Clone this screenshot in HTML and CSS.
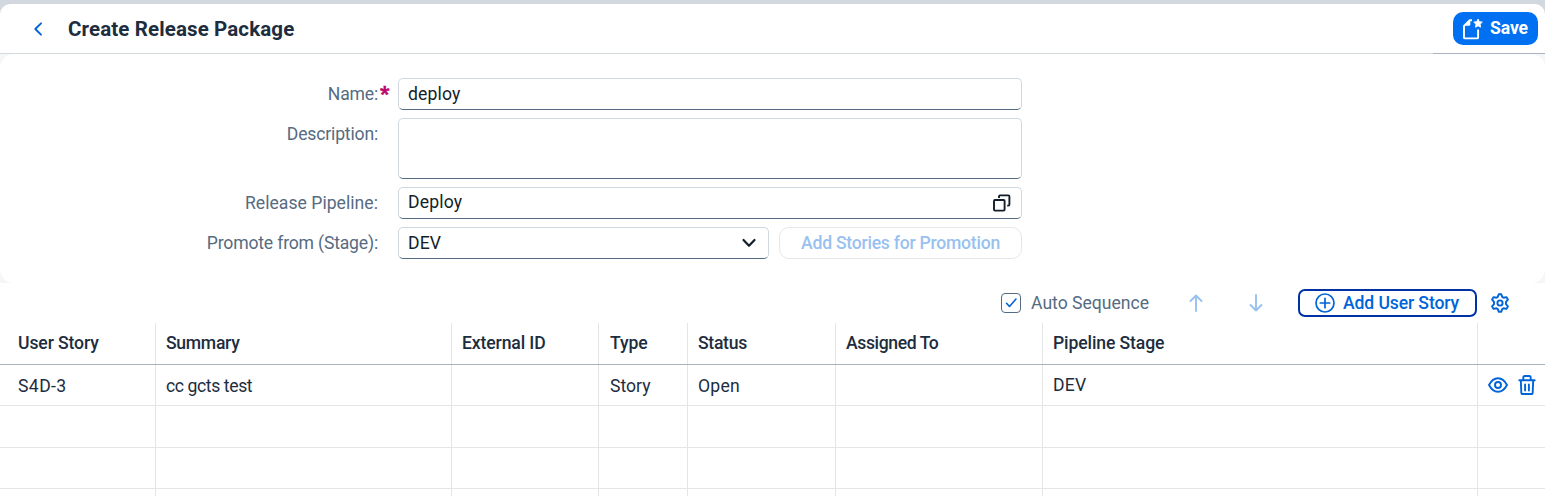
FILE: index.html
```html
<!DOCTYPE html>
<html lang="en">
<head>
<meta charset="utf-8">
<title>Create Release Package</title>
<link rel="stylesheet" href="styles.css">
</head>
<body>
<div class="page">
  <header class="header">
    <button class="back" aria-label="Back">
      <svg width="10" height="16" viewBox="0 0 10 16"><path d="M8 2.3 2.3 8 8 13.7" fill="none" stroke="currentColor" stroke-width="1.9" stroke-linecap="round" stroke-linejoin="round"/></svg>
    </button>
    <h1 class="title">Create Release Package</h1>
    <button class="save">
      <svg width="22" height="24" viewBox="0 0 22 24"><path d="M11 3.300H8.500L3 8.800v11.700q0 .9.900.9h12.300q.9 0 .9-.9V12.500" fill="none" stroke="currentColor" stroke-width="1.900" stroke-linejoin="round"/><path d="M9.300 3v4.300q0 1.500-1.500 1.500H3z" fill="currentColor"/><path d="m17.100 2 1.200 2.700 3 .4-2.200 2.100.5 3-2.500-1.400-2.600 1.400.5-3L12.800 5.100l3-.4z" fill="currentColor" stroke="currentColor" stroke-width=".9" stroke-linejoin="round"/></svg>
      <span class="save-text">Save</span>
    </button>
  </header>
  <div class="form-area">
    <form class="form">
      <label class="label name">Name:<span class="required">*</span></label>
      <div class="field input-name"><span>deploy</span></div>
      <label class="label description">Description:</label>
      <div class="field field-tall"></div>
      <label class="label">Release Pipeline:</label>
      <div class="field"><span>Deploy</span>
        <svg class="value-help" width="20" height="20" viewBox="0 0 20 20" fill="none" stroke="currentColor" stroke-width="1.900"><rect x="2" y="7" width="10.600" height="10.600" rx="1"/><path d="M7 5V3.400q0-1 1-1h8.400q1 0 1 1v8.200q0 1-1 1h-1.200"/></svg>
      </div>
      <label class="label promote-from">Promote from (Stage):</label>
      <div class="stage-row">
        <div class="field stage"><span>DEV</span>
          <svg class="chevron" width="16" height="12" viewBox="0 0 16 12"><path d="m2.500 3 5.500 5.800L13.500 3" fill="none" stroke="currentColor" stroke-width="2.200" stroke-linecap="round" stroke-linejoin="round"/></svg>
        </div>
        <button type="button" class="promote" disabled>Add Stories for Promotion</button>
      </div>
    </form>
  </div>
  <div class="toolbar">
    <span class="checkbox"><svg width="18" height="18" viewBox="0 0 18 18"><path d="m4.500 9.300 3 3.200L14 5" fill="none" stroke="currentColor" stroke-width="1.600" stroke-linecap="round" stroke-linejoin="round"/></svg></span>
    <span class="auto">Auto Sequence</span>
    <svg class="arrow up" width="14" height="18" viewBox="0 0 14 18"><path d="M7 17V1.500M1.500 7 7 1.500 12.500 7"/></svg>
    <svg class="arrow down" width="14" height="18" viewBox="0 0 14 18"><path d="M7 1v15.500M1.500 11 7 16.500 12.500 11"/></svg>
    <button class="add-story">
      <svg width="20" height="20" viewBox="0 0 20 20" fill="none" stroke="currentColor" stroke-width="1.700"><circle cx="10" cy="10" r="9"/><path d="M10 5.300v9.400M5.300 10h9.400" stroke-linecap="round"/></svg>
      <span>Add User Story</span>
    </button>
    <svg class="gear" width="20" height="20" viewBox="0 0 20 20" fill="none" stroke="currentColor" stroke-width="1.900" stroke-linejoin="round"><path d="M8.700 1.200h2.600l.9 2.700 1.400.8 2.800-.6 1.500 2.500-1.900 2.200v2.400l1.900 2.200-1.500 2.500-2.800-.6-1.400.8-.9 2.700H8.700l-.9-2.700-1.400-.8-2.800.6-1.500-2.500L4 11.200V8.800L2.100 6.600l1.500-2.500 2.800.6 1.400-.8z"/><circle cx="10" cy="10" r="2.600"/></svg>
  </div>
  <div class="table">
    <div class="row head"><div>User Story</div><div class="tight">Summary</div><div>External ID</div><div class="type">Type</div><div class="tight">Status</div><div class="tighter">Assigned To</div><div>Pipeline Stage</div><div></div></div>
    <div class="row story"><div class="wide">S4D-3</div><div class="tighter">cc gcts test</div><div></div><div class="type">Story</div><div class="open">Open</div><div></div><div class="dev">DEV</div>
      <div class="actions">
        <svg width="20" height="16" viewBox="0 0 20 16" fill="none" stroke="currentColor" stroke-width="1.900"><path d="M1 8q3.600-6.800 9-6.800T19 8q-3.600 6.800-9 6.800T1 8z" stroke-linejoin="round"/><circle cx="10" cy="8" r="3"/></svg>
        <svg width="18" height="20" viewBox="0 0 18 20" fill="none" stroke="currentColor" stroke-width="1.900" stroke-linecap="round" stroke-linejoin="round"><path d="M1.300 5.200h15.400M2.800 5.200l.5 12.200q0 1.600 1.500 1.600h8.400q1.500 0 1.500-1.600l.5-12.200M5.300 4.800V2.600Q5.300 1 6.800 1h4.400q1.500 0 1.500 1.600v2.200M7.100 9.500v6M10.900 9.500v6"/></svg>
      </div></div>
    <div class="row tall"><div></div><div></div><div></div><div></div><div></div><div></div><div></div><div></div></div>
    <div class="row"><div></div><div></div><div></div><div></div><div></div><div></div><div></div><div></div></div>
    <div class="row last"><div></div><div></div><div></div><div></div><div></div><div></div><div></div><div></div></div>
  </div>
</div>
</body>
</html>
```
FILE: styles.css
```css
* { box-sizing: border-box; }
body { margin: 0; background: #d2d8dd; font: 17.6px/20px Roboto, "Liberation Sans", sans-serif; color: #1d2d3e; }
button { font: inherit; margin: 0; padding: 0; border: 0; background: none; display: flex; align-items: center; }
svg { display: block; flex: none; }
.page { height: 496px; padding-top: 4px; overflow: hidden; }
.header { height: 50px; display: flex; align-items: center; padding: 0 7px 1px 33px; background: linear-gradient(90deg, #d5dadd 1433px, #a8b3bf 1433px) bottom / 100% 1px no-repeat, #fff; border-radius: 10px 10px 0 0; }
.back { width: 35px; color: #0064d9; }
.title { margin: 0; font-size: 20.5px; line-height: 24px; font-weight: 700; letter-spacing: .12px; }
.save { margin-left: auto; width: 85px; height: 33px; gap: 7px; padding-left: 8px; background: #0070f2; color: #fff; border-radius: 10px; font-weight: 700; }
.save-text { letter-spacing: -.1px; padding-bottom: 2px; }
.form-area { background: #f5f6f7; }
.form { height: 229px; padding: 24px 0; background: #fff; border-radius: 14px; display: grid; grid-template-columns: 378px 624px; column-gap: 20px; grid-template-rows: 32px 61px 32px 32px; row-gap: 8px; }
.label { text-align: right; color: #556b82; padding-top: 6px; position: relative; letter-spacing: .03px; }
.name { letter-spacing: -.2px; }
.description, .promote-from { letter-spacing: -.18px; }
.required { position: absolute; left: 380px; top: 6px; color: #ba066c; font-weight: 900; font-size: 20px; -webkit-text-stroke: .5px #ba066c; }
.field { height: 32px; border: 1px solid #d0d7de; border-bottom-color: #556b82; border-radius: 5px; display: flex; align-items: center; justify-content: space-between; padding: 0 9px 2px; color: #131e29; background: #fff; letter-spacing: .15px; }
.input-name, .stage { padding-bottom: 0; }
.value-help { margin-top: 2px; }
.field-tall { height: 61px; }
.stage-row { display: flex; gap: 10px; }
.stage { width: 371px; padding-right: 11px; }
.promote { width: 243px; height: 32px; justify-content: center; border: 1px solid #e5e8ea; border-radius: 10px; color: #99c1f0; font-weight: 500; letter-spacing: -.25px; padding-bottom: 1px; }
.toolbar { height: 40px; background: #fff; display: flex; align-items: center; padding-left: 1001px; }
.checkbox { width: 20px; height: 20px; border: 1px solid #556b82; border-radius: 4px; color: #0064d9; }
.auto { margin-left: 10px; width: 158px; color: #556b82; padding-bottom: 1px; }
.arrow { fill: none; stroke: #99c1f0; stroke-width: 1.9; stroke-linecap: round; stroke-linejoin: round; }
.down { margin-left: 46px; }
.add-story { margin-left: 35px; width: 179px; height: 28px; border: 2px solid #0032a5; border-radius: 7px; padding-left: 15px; gap: 8px; color: #0064d9; font-weight: 500; letter-spacing: -.12px; }
.add-story span { padding-bottom: 1px; }
.gear { margin-left: 13px; color: #0064d9; }
.table { background: #fff; }
.row { height: 41px; display: grid; grid-template-columns: 156px 296px 147px 89px 148px 207px 435px 67px; border-bottom: 1px solid #e5e5e5; }
.row > div { border-right: 1px solid #e5e5e5; padding-left: 10px; display: flex; align-items: center; white-space: nowrap; }
.row > div:first-child { padding-left: 18px; }
.row > div:last-child { border-right: 0; }
.head { height: 42px; font-weight: 500; letter-spacing: -.12px; border-bottom-color: #a8b3bf; }
.head > div { padding-bottom: 2px; }
.story > div { padding-top: 2px; }
.tall { height: 42px; }
.tight { letter-spacing: -.3px; }
.tighter { letter-spacing: -.4px; }
.wide { letter-spacing: .4px; }
.open { letter-spacing: .2px; }
.row > .type { padding-left: 11px; }
.row > .dev { padding-top: 0; letter-spacing: .2px; }
.row > .actions { padding: 0 0 0 10px; gap: 10px; color: #0064d9; }
```
